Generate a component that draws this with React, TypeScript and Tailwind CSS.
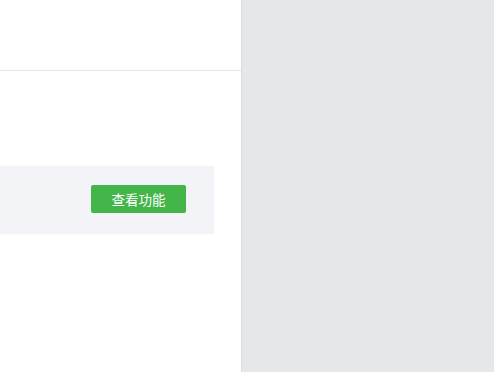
export default function App() {
  return (
    <div
      className="flex h-[372px] w-[494px] overflow-hidden bg-white"
      style={{ fontFamily: '"Noto Sans CJK SC", "Liberation Sans", sans-serif' }}
    >
      {/* main column */}
      <div className="flex w-[241px] shrink-0 flex-col">
        <div className="h-[71px] border-b border-[#e7e7eb]" />
        <div className="pt-[95px] pr-[27px]">
          <div className="flex h-[68px] items-center justify-end bg-[#f3f4f7] pr-[28px] pb-[2px]">
            <button className="flex h-[28px] w-[95px] items-center justify-center rounded-[2px] bg-[#44b549] text-[13.5px] text-white">
              查看功能
            </button>
          </div>
        </div>
      </div>

      {/* side panel */}
      <div className="flex-1 border-l border-[#dcdde3] bg-[#e6e7eb]" />
    </div>
  )
}
